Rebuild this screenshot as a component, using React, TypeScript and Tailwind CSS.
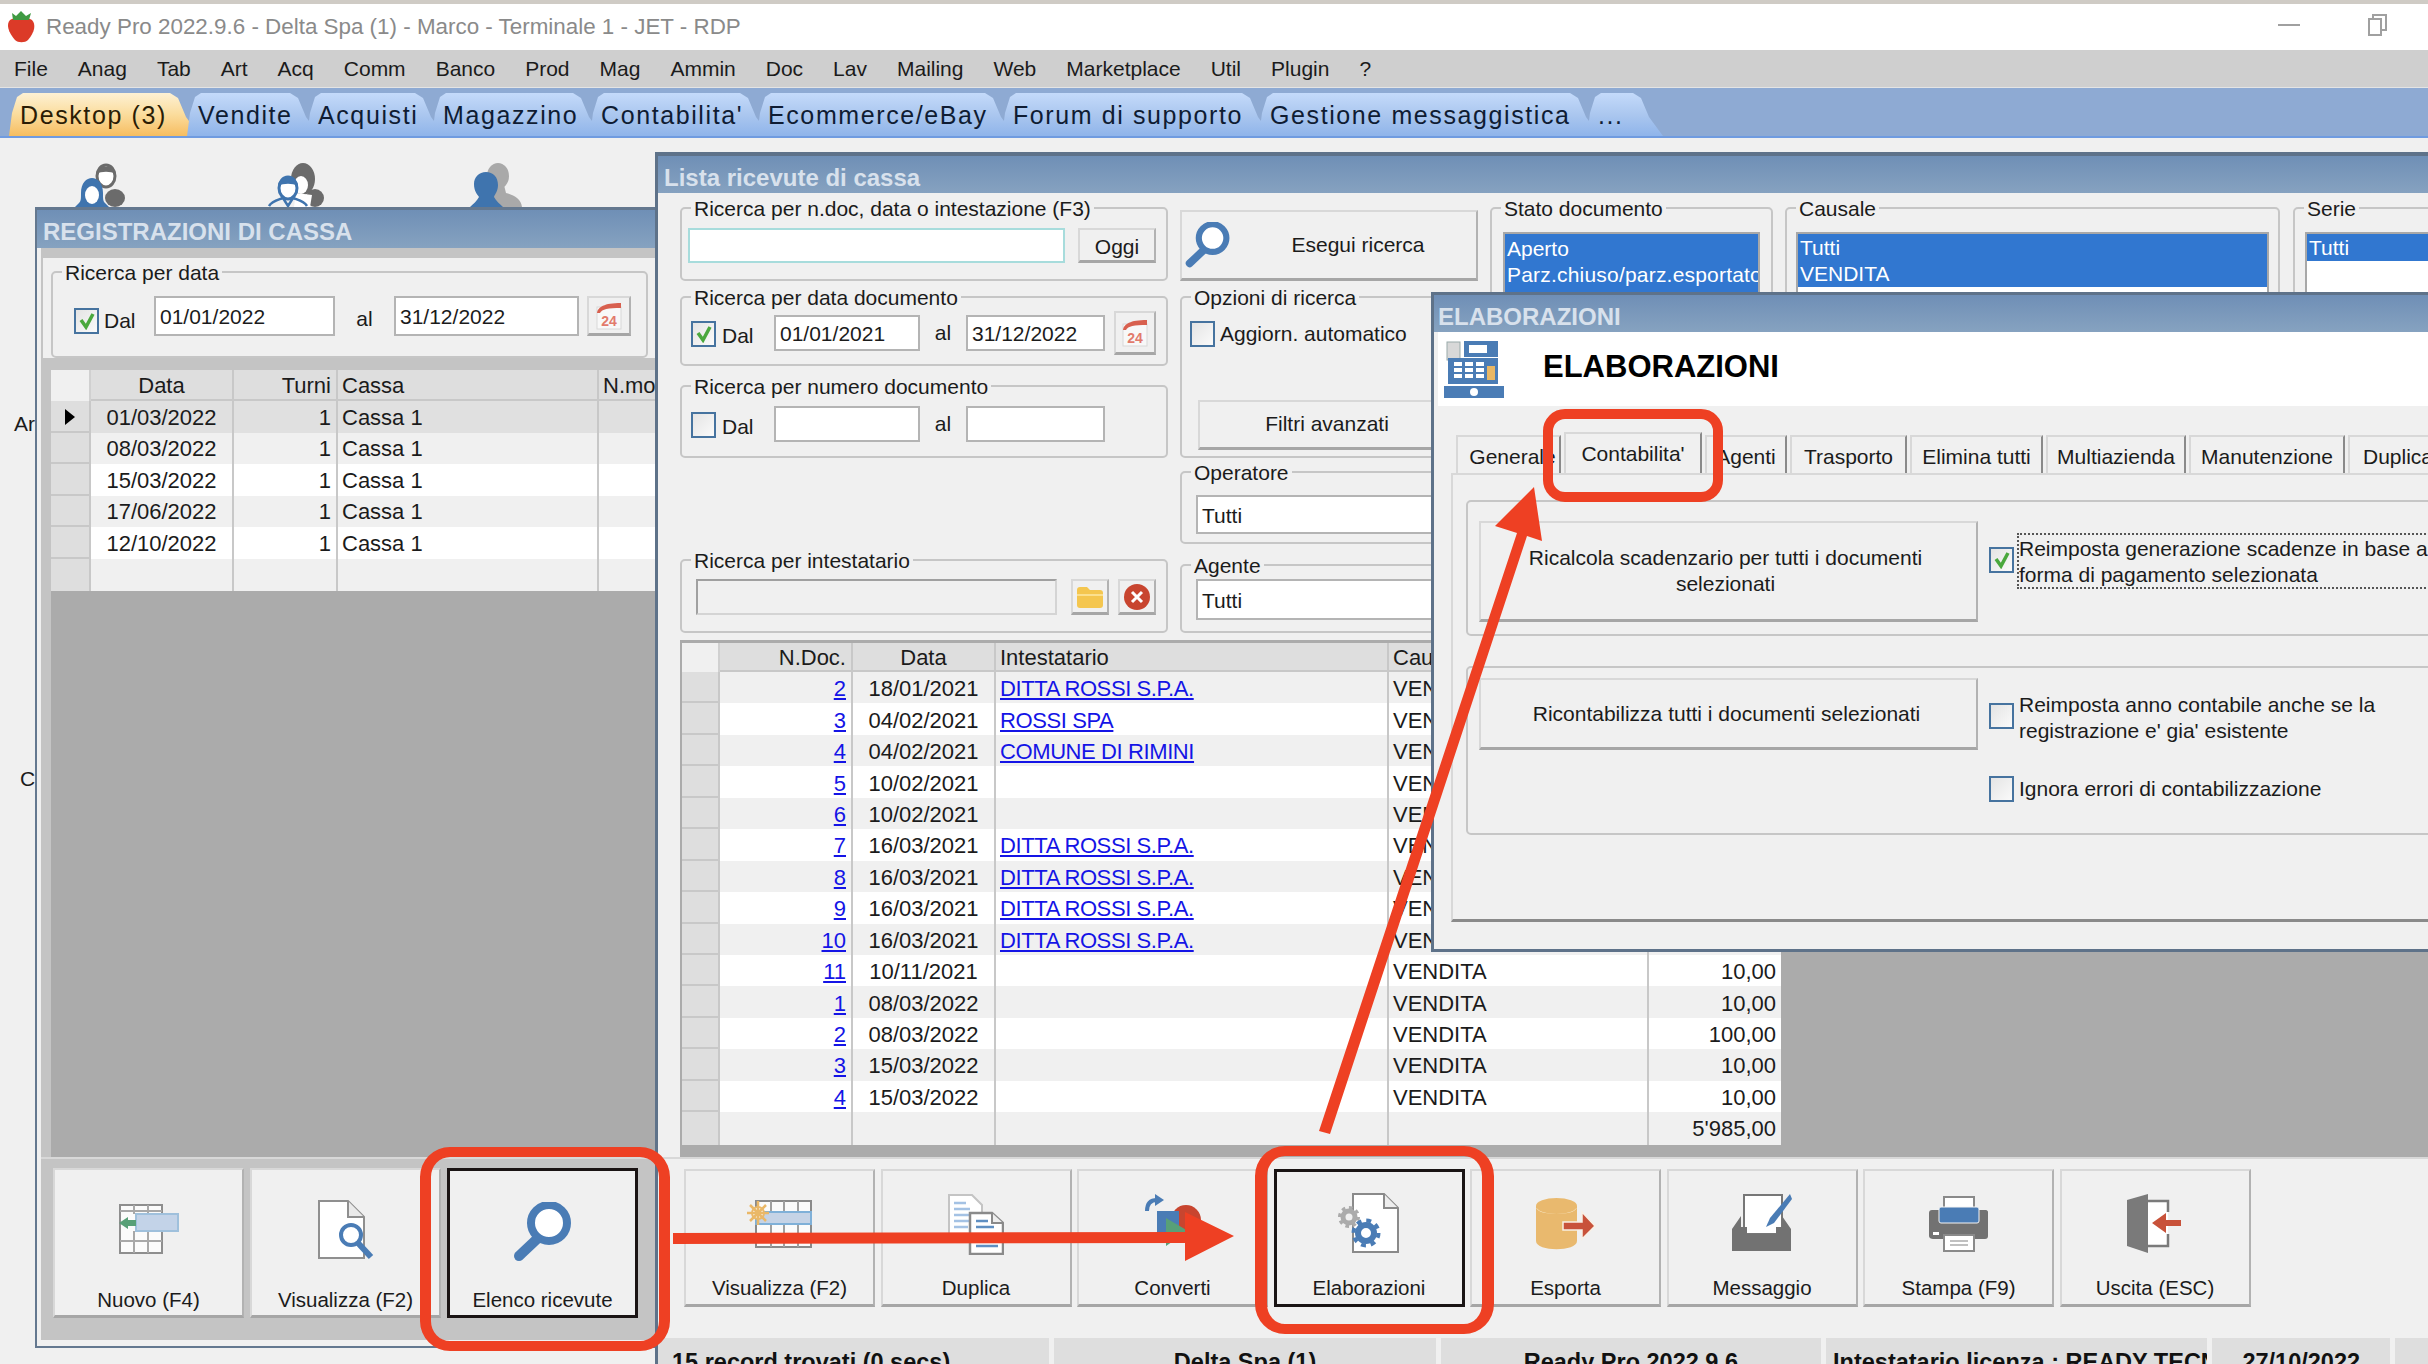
import type { ReactNode } from 'react';

const menuItems = ['File', 'Anag', 'Tab', 'Art', 'Acq', 'Comm', 'Banco', 'Prod', 'Mag', 'Ammin', 'Doc', 'Lav', 'Mailing', 'Web', 'Marketplace', 'Util', 'Plugin', '?'];

const topTabs = [
  { label: 'Desktop (3)', width: 'w-[191px]', active: true },
  { label: 'Vendite', width: 'w-[133px]' },
  { label: 'Acquisti', width: 'w-[138px]' },
  { label: 'Magazzino', width: 'w-[171px]' },
  { label: "Contabilita'", width: 'w-[180px]' },
  { label: 'Ecommerce/eBay', width: 'w-[258px]' },
  { label: 'Forum di supporto', width: 'w-[270px]' },
  { label: 'Gestione messaggistica', width: 'w-[341px]' },
  { label: '...', width: 'w-[76px]' },
];

const cashRows = [
  ['01/03/2022', 'bg-[#e0e0e0]'],
  ['08/03/2022', 'bg-[#f0f0f0]'],
  ['15/03/2022', 'bg-white'],
  ['17/06/2022', 'bg-[#f0f0f0]'],
  ['12/10/2022', 'bg-white'],
];

const docRows = [
  ['2', '18/01/2021', 'DITTA ROSSI S.P.A.', '10,00'],
  ['3', '04/02/2021', 'ROSSI SPA', '10,00'],
  ['4', '04/02/2021', 'COMUNE DI RIMINI', '10,00'],
  ['5', '10/02/2021', '', '10,00'],
  ['6', '10/02/2021', '', '10,00'],
  ['7', '16/03/2021', 'DITTA ROSSI S.P.A.', '10,00'],
  ['8', '16/03/2021', 'DITTA ROSSI S.P.A.', '10,00'],
  ['9', '16/03/2021', 'DITTA ROSSI S.P.A.', '10,00'],
  ['10', '16/03/2021', 'DITTA ROSSI S.P.A.', '10,00'],
  ['11', '10/11/2021', '', '10,00'],
  ['1', '08/03/2022', '', '10,00'],
  ['2', '08/03/2022', '', '100,00'],
  ['3', '15/03/2022', '', '10,00'],
  ['4', '15/03/2022', '', '10,00'],
];

const dialogTabs = [
  { label: 'Generale', width: 'w-[105px] pl-[8px]' },
  { label: "Contabilita'", width: 'w-[138px]', active: true },
  { label: 'Agenti', width: 'w-[82px]' },
  { label: 'Trasporto', width: 'w-[117px]' },
  { label: 'Elimina tutti', width: 'w-[133px]' },
  { label: 'Multiazienda', width: 'w-[140px]' },
  { label: 'Manutenzione', width: 'w-[156px]' },
  { label: 'Duplica', width: 'w-[100px]' },
];

const btnClass = 'border-2 border-[#d8d8d8] border-r-[#b2b2b2] border-b-[3px] border-b-[#a6a6a6] bg-[#f0f0f0]';
const inputClass = 'border-2 border-[#b4b4b4] bg-white pl-[4px] pt-[2px] flex items-center';

function Strawberry() {
  return (
    <svg width="30" height="34" viewBox="0 0 30 34">
      <path d="M4 10 C8 7 22 7 26 10 C30 14 29 22 22 30 C19 33 12 33 9 30 C2 22 0 14 4 10Z" fill="#dc3a28" />
      <path d="M6 3 L10 6 L15 1 L20 6 L25 3 L23 10 L7 10Z" fill="#3f9a42" />
    </svg>
  );
}

function UserPair({ variant }: { variant: 1 | 2 | 3 }) {
  if (variant === 1) {
    return (
      <svg width="54" height="44" viewBox="0 0 54 44">
        <ellipse cx="40" cy="35" rx="10" ry="9" fill="#6b6b6b" />
        <ellipse cx="31" cy="13" rx="9" ry="11" fill="#fff" stroke="#6b6b6b" strokeWidth="3" />
        <path d="M21 11 C22 1 40 1 41 11 C35 8 27 8 21 11Z" fill="#6b6b6b" />
        <path d="M6 30 C6 10 28 10 28 30 C28 36 28 38 30 40 L34 44 H0 L4 40 C6 38 6 36 6 30Z" fill="#3f74ae" />
        <ellipse cx="17" cy="32" rx="7" ry="9" fill="#fff" />
      </svg>
    );
  }
  if (variant === 2) {
    return (
      <svg width="58" height="44" viewBox="0 0 58 44">
        <ellipse cx="47" cy="35" rx="9" ry="9" fill="#6b6b6b" />
        <ellipse cx="35" cy="16" rx="12" ry="16" fill="#6b6b6b" />
        <ellipse cx="33" cy="22" rx="7" ry="9" fill="#fff" />
        <path d="M28 30 L44 32 L42 44 H26Z" fill="#fff" />
        <ellipse cx="20" cy="25" rx="9" ry="11" fill="#fff" stroke="#3f74ae" strokeWidth="3" />
        <path d="M10 23 C10 12 30 12 30 23 C24 20 16 20 10 23Z" fill="#3f74ae" />
        <path d="M1 43 C4 38 10 37 15 35 L20 43 L25 35 C30 37 36 38 39 43" fill="none" stroke="#3f74ae" strokeWidth="2.5" />
      </svg>
    );
  }
  return (
    <svg width="54" height="44" viewBox="0 0 54 44">
      <ellipse cx="28" cy="13" rx="11" ry="13" fill="#a9a9a9" />
      <path d="M22 22 H34 L36 30 C44 32 51 36 52 44 H22Z" fill="#a9a9a9" />
      <path d="M16 9 C23 9 28 14 28 22 C28 28 25 31 24 34 C26 38 30 41 33 44 H0 C3 41 7 38 9 34 C7 31 4 28 4 21 C4 14 9 9 16 9Z" fill="#3f74ae" />
    </svg>
  );
}

function CalendarIcon() {
  return (
    <svg width="30" height="30" viewBox="0 0 30 30">
      <rect x="3" y="6" width="24" height="22" fill="#f8f8f8" stroke="#d8d8d8" />
      <path d="M3 12 C4 6 10 2 27 2 L27 7 C14 7 8 8 6 12Z" fill="#d8604f" />
      <text x="15" y="25" textAnchor="middle" fontSize="14" fontWeight="700" fill="#e27a6c" fontFamily="Liberation Sans, sans-serif">24</text>
    </svg>
  );
}

function CheckBox({ checked = false, className = '' }: { checked?: boolean; className?: string }) {
  return (
    <div className={`w-[25px] h-[26px] shrink-0 border-2 border-[#46739f] bg-gradient-to-br from-[#e4e4e4] to-[#fafafa] flex items-center justify-center ${className}`}>
      {checked && (
        <svg width="18" height="18" viewBox="0 0 18 18">
          <path d="M3 8 L8 15 L15 2" fill="none" stroke="#4aa83d" strokeWidth="3.5" />
        </svg>
      )}
    </div>
  );
}

function Magnifier({ size }: { size: number }) {
  return (
    <svg width={size} height={size} viewBox="0 0 60 60">
      <circle cx="36" cy="21" r="18" fill="#fff" stroke="#4a7cb5" strokeWidth="8" />
      <path d="M24 37 L6 54" stroke="#4a7cb5" strokeWidth="10" strokeLinecap="round" />
    </svg>
  );
}

function NuovoIcon() {
  return (
    <svg width="60" height="50" viewBox="0 0 60 50">
      <path d="M1 1H43V49H1Z" fill="#fbfbfb" stroke="#8e8e8e" strokeWidth="2" />
      <path d="M1 7H43M1 37H43M15 1V10M29 1V10M15 27V49M29 27V49" stroke="#a8a8a8" strokeWidth="2" />
      <rect x="17" y="10" width="42" height="17" fill="#c3d3e8" stroke="#9fc0dc" strokeWidth="2" />
      <path d="M0 19 L9 13 V16 H17 V22 H9 V25Z" fill="#58a077" />
    </svg>
  );
}

function DocSearchIcon() {
  return (
    <svg width="56" height="60" viewBox="0 0 56 60">
      <path d="M1 1 H30 L46 17 V58 H1Z" fill="#fff" stroke="#8f8f8f" strokeWidth="2" />
      <path d="M30 1 V17 H46" fill="#eaeaea" stroke="#8f8f8f" strokeWidth="2" />
      <circle cx="33" cy="35" r="10" fill="#fff" stroke="#4a7cb5" strokeWidth="4" />
      <path d="M40 43 L53 57" stroke="#4a7cb5" strokeWidth="6" />
    </svg>
  );
}

function TableStarIcon() {
  return (
    <svg width="66" height="48" viewBox="0 0 66 48">
      <path d="M9 1H64V47H9Z" fill="#fbfbfb" stroke="#8a8a8a" strokeWidth="2" />
      <path d="M9 36H64M24 1V12M37 1V12M51 1V12M24 24V47M37 24V47M51 24V47" stroke="#a0a0a0" strokeWidth="2" />
      <rect x="9" y="12" width="55" height="12" fill="#c5d3e6" stroke="#7fb0d8" strokeWidth="2" />
      <circle cx="11" cy="13" r="6" fill="#fbfbfb" stroke="#eab868" strokeWidth="2" />
      <path d="M11 1V25M0 13H22M3 5L19 21M19 5L3 21" stroke="#eab868" strokeWidth="2.5" />
    </svg>
  );
}

function DuplicaIcon() {
  return (
    <svg width="56" height="61" viewBox="0 0 56 61">
      <path d="M1 1H24L34 11V46H1Z" fill="#fff" stroke="#c4c4c4" strokeWidth="2" />
      <path d="M6 9H18M6 15H22M6 21H24M6 27H24M6 33H20" stroke="#a4c2e4" strokeWidth="2.5" />
      <path d="M22 19H44L55 29V60H22Z" fill="#fff" stroke="#8a8a8a" strokeWidth="2.5" />
      <path d="M44 19V29H55" fill="#eee" stroke="#8a8a8a" strokeWidth="2" />
      <path d="M28 27H40M28 33H46M28 46H50M28 52H50" stroke="#5f8fc2" strokeWidth="2.5" />
    </svg>
  );
}

function ConvertiIcon() {
  return (
    <svg width="58" height="56" viewBox="0 0 58 56">
      <circle cx="42" cy="26" r="15" fill="#c8452f" />
      <rect x="13" y="17" width="22" height="24" fill="#4a7cb5" />
      <path d="M22 24 L44 37 L22 52Z" fill="#58a077" />
      <path d="M3 17 C3 9 7 6 13 6" fill="none" stroke="#4a7cb5" strokeWidth="4" />
      <path d="M11 0 L20 6 L11 12Z" fill="#4a7cb5" />
    </svg>
  );
}

function GearDocIcon() {
  return (
    <svg width="62" height="62" viewBox="0 0 62 62">
      <path d="M15 2H46L60 16V60H15Z" fill="#fff" stroke="#8a8a8a" strokeWidth="2" />
      <path d="M46 2V16H60" fill="#eee" stroke="#8a8a8a" strokeWidth="2" />
      <circle cx="11" cy="25" r="6" fill="#f0f0f0" stroke="#ababab" strokeWidth="5" />
      <circle cx="11" cy="25" r="9.5" fill="none" stroke="#ababab" strokeWidth="3" strokeDasharray="3.7 3.7" />
      <circle cx="28" cy="41" r="8" fill="#fff" stroke="#4a7cb5" strokeWidth="6" />
      <circle cx="28" cy="41" r="12.5" fill="none" stroke="#4a7cb5" strokeWidth="4" strokeDasharray="4.9 4.9" />
    </svg>
  );
}

function EsportaIcon() {
  return (
    <svg width="60" height="52" viewBox="0 0 60 52">
      <path d="M0 8 V43 C0 54 41 54 41 43 V8Z" fill="#e9b96e" />
      <path d="M1 10 C5 17 36 17 40 10" fill="none" stroke="#f9e8c8" strokeWidth="1.5" />
      <ellipse cx="20.5" cy="8" rx="20.5" ry="8" fill="#e9b96e" />
      <path d="M27 24H46V14L59 28L46 41V32H27Z" fill="#c8523a" stroke="#f8efe4" strokeWidth="1.5" />
    </svg>
  );
}

function MessaggioIcon() {
  return (
    <svg width="60" height="58" viewBox="0 0 60 58">
      <path d="M12 1H50V40H12Z" fill="#fff" stroke="#777" strokeWidth="2" />
      <path d="M58 0 L38 24 L34 33 L42 29 L60 5Z" fill="#4a7cb5" />
      <path d="M9 22 V33 H15 V40 H44 V33 H50 V22 L59 35 V57 H0 V35Z" fill="#727272" />
    </svg>
  );
}

function PrinterIcon() {
  return (
    <svg width="60" height="56" viewBox="0 0 60 56">
      <rect x="15" y="1" width="30" height="14" fill="#fff" stroke="#8a8a8a" strokeWidth="2" />
      <path d="M3 14H57C58 14 59 15 59 16V40C59 42 58 43 56 43H4C2 43 0 42 0 40V17C0 15 1 14 3 14Z" fill="#727272" />
      <rect x="10" y="11" width="40" height="16" rx="2" fill="#4a7cb5" stroke="#f4f4f4" strokeWidth="1" />
      <rect x="4" y="36" width="6" height="3" fill="#fff" />
      <rect x="15" y="39" width="30" height="16" fill="#fff" stroke="#8a8a8a" strokeWidth="2" />
      <path d="M21 45H39M21 49H39" stroke="#c0c0c0" strokeWidth="2" />
    </svg>
  );
}

function UscitaIcon() {
  return (
    <svg width="56" height="60" viewBox="0 0 56 60">
      <rect x="21" y="7" width="20" height="45" fill="#fff" />
      <path d="M21 7H41V18M41 40V52H21" fill="none" stroke="#7a7a7a" strokeWidth="2.5" />
      <path d="M0 6 L21 0 V59 L0 52Z" fill="#7a7a7a" />
      <path d="M54 26H39V19L25 29L39 39V32H54Z" fill="#c8523a" />
    </svg>
  );
}

function CashRegister() {
  return (
    <svg width="60" height="58" viewBox="0 0 60 58">
      <rect x="3" y="2" width="13" height="18" fill="#d8d8d8" stroke="#9aa" />
      <rect x="20" y="1" width="34" height="16" fill="#4a7cb5" />
      <rect x="25" y="5" width="18" height="8" fill="#fff" />
      <path d="M4 18H54V44H4Z" fill="#4a7cb5" />
      <path d="M10 24H18M21 24H29M32 24H40M10 30H18M21 30H29M32 30H40M10 36H18M21 36H29M32 36H40" stroke="#fff" strokeWidth="4" />
      <rect x="43" y="26" width="8" height="14" fill="#e8b765" />
      <rect x="0" y="46" width="60" height="12" fill="#4a7cb5" />
      <circle cx="30" cy="52" r="4" fill="#fff" />
    </svg>
  );
}

function Group({ label, className, children }: { label: string; className: string; children?: ReactNode }) {
  return (
    <div className={`relative shrink-0 border-2 border-[#c6c6c6] rounded-[5px] ${className}`}>
      <span className="absolute -top-[12px] left-[9px] bg-[#f0f0f0] px-[3px] leading-[24px] whitespace-nowrap text-[#1b1b1b]">{label}</span>
      {children}
    </div>
  );
}

function ToolButton({ label, icon, selected, height, iconTop, labelBottom }: { label: string; icon: ReactNode; selected?: boolean; height: string; iconTop: string; labelBottom: string }) {
  return (
    <div className={`w-[191px] shrink-0 flex flex-col items-center justify-between ${height} ${selected ? 'border-[3px] border-[#1a1414] bg-[#f0f0f0]' : btnClass}`}>
      <div className={iconTop}>{icon}</div>
      <span className={`leading-[24px] whitespace-nowrap text-[#1b1b1b] ${labelBottom}`}>{label}</span>
    </div>
  );
}

function DateFields({ from, to, checked, calendar }: { from?: string; to?: string; checked?: boolean; calendar?: boolean }) {
  return (
    <div className="flex items-center h-full pt-[4px] pl-[9px]">
      <CheckBox checked={checked} className="mt-[2px]" />
      <span className="ml-[6px] w-[52px] mt-[6px]">Dal</span>
      <div className={`${inputClass} w-[146px] h-[36px]`}>{from}</div>
      <span className="w-[46px] text-center">al</span>
      <div className={`${inputClass} w-[139px] h-[36px]`}>{to}</div>
      {calendar && (
        <div className={`${btnClass} ml-[9px] w-[42px] h-[44px] flex items-center justify-center`}>
          <CalendarIcon />
        </div>
      )}
    </div>
  );
}

function CashWindow() {
  return (
    <div className="absolute left-[35px] top-[69px] w-[640px] h-[1141px] bg-[#f0f0f0] border-l-2 border-t-[3px] border-b-2 border-[#64788f] flex flex-col">
      <div className="h-[38px] shrink-0 bg-gradient-to-b from-[#6f8fb6] to-[#86a2c0] pl-[6px] pt-[6px] flex items-center text-[24px] font-bold text-[#d8e1ec] leading-none">
        REGISTRAZIONI DI CASSA
      </div>
      <div className="ml-[4px] h-[1092px] shrink-0 bg-[#c4c4c4] pt-[10px] flex flex-col">
        <div className="ml-[2px] h-[100px] shrink-0 bg-[#f0f0f0] pt-[13px] pl-[8px] w-[612px]">
          <Group label="Ricerca per data" className="w-[597px] h-[87px]">
            <div className="flex items-center h-full pt-[3px] pl-[21px]">
              <CheckBox checked className="mt-[10px]" />
              <span className="ml-[5px] w-[50px] mt-[10px]">Dal</span>
              <div className={`${inputClass} w-[181px] h-[40px]`}>01/01/2022</div>
              <span className="w-[59px] text-center mt-[6px]">al</span>
              <div className={`${inputClass} w-[185px] h-[40px]`}>31/12/2022</div>
              <div className={`${btnClass} ml-[8px] w-[44px] h-[40px] flex items-center justify-center`}>
                <CalendarIcon />
              </div>
            </div>
          </Group>
        </div>
        <div className="mt-[12px] ml-[10px] h-[787px] shrink-0 bg-[#ababab] w-[606px] overflow-hidden text-[22px] leading-none">
          <div className="grid grid-cols-[40px_143px_104px_261px_60px] h-[31px] [&>div]:pt-[2px]">
            <div className="bg-[#f0f0f0] border-r-2 border-[#d0d0d0]" />
            <div className="bg-[#dedede] border-r-2 border-b-2 border-[#c8c8c8] flex items-center justify-center">Data</div>
            <div className="bg-[#dedede] border-r-2 border-b-2 border-[#c8c8c8] flex items-center justify-end pr-[5px]">Turni</div>
            <div className="bg-[#dedede] border-r-2 border-b-2 border-[#c8c8c8] flex items-center pl-[4px]">Cassa</div>
            <div className="bg-[#dedede] border-b-2 border-[#c8c8c8] flex items-center pl-[4px] overflow-hidden whitespace-nowrap">N.mov</div>
          </div>
          {cashRows.map(([date, bg], i) => (
            <div key={date} className={`grid grid-cols-[40px_143px_104px_261px_60px] h-[31.5px] [&>div]:pt-[2px] ${bg}`}>
              <div className="bg-[#dedede] border-r-2 border-b-2 border-[#c8c8c8] flex items-center justify-center">
                {i === 0 && <div className="w-0 h-0 border-y-[8px] border-y-transparent border-l-[10px] border-l-black" />}
              </div>
              <div className="border-r-2 border-[#c8c8c8] flex items-center justify-center">{date}</div>
              <div className="border-r-2 border-[#c8c8c8] flex items-center justify-end pr-[5px]">1</div>
              <div className="border-r-2 border-[#c8c8c8] flex items-center pl-[4px]">Cassa 1</div>
              <div />
            </div>
          ))}
          <div className="grid grid-cols-[40px_143px_104px_261px_60px] h-[32px] bg-[#f0f0f0]">
            <div className="bg-[#dedede] border-r-2 border-[#c8c8c8]" />
            <div className="border-r-2 border-[#c8c8c8]" />
            <div className="border-r-2 border-[#c8c8c8]" />
            <div className="border-r-2 border-[#c8c8c8]" />
            <div />
          </div>
        </div>
        <div className="flex-1 border-t-2 border-[#d8d8d8] pt-[9px] pl-[12px] flex gap-[6px] text-[20.5px]">
          <ToolButton label="Nuovo (F4)" icon={<NuovoIcon />} height="h-[150px]" iconTop="mt-[34px]" labelBottom="mb-[3px]" />
          <ToolButton label="Visualizza (F2)" icon={<DocSearchIcon />} height="h-[150px]" iconTop="mt-[30px]" labelBottom="mb-[3px]" />
          <ToolButton label="Elenco ricevute" icon={<Magnifier size={60} />} height="h-[150px]" iconTop="mt-[31px]" labelBottom="mb-[3px]" selected />
        </div>
      </div>
    </div>
  );
}

function DocGrid() {
  const cols = 'grid grid-cols-[38px_133px_143px_393px_260px_132px] w-[1099px]';
  return (
    <div className="ml-[22px] h-[517px] shrink-0 bg-[#ababab] pl-[2px] pt-[3px] text-[22px] leading-none overflow-hidden">
      <div className={`${cols} h-[29px] [&>div]:pt-[2px]`}>
        <div className="bg-[#f0f0f0] border-r-2 border-[#d0d0d0]" />
        <div className="bg-[#dedede] border-r-2 border-b-2 border-[#c8c8c8] flex items-center justify-end pr-[5px]">N.Doc.</div>
        <div className="bg-[#dedede] border-r-2 border-b-2 border-[#c8c8c8] flex items-center justify-center">Data</div>
        <div className="bg-[#dedede] border-r-2 border-b-2 border-[#c8c8c8] flex items-center pl-[4px]">Intestatario</div>
        <div className="bg-[#dedede] border-r-2 border-b-2 border-[#c8c8c8] flex items-center pl-[4px]">Causale</div>
        <div className="bg-[#dedede] border-b-2 border-[#c8c8c8] flex items-center justify-end pr-[5px]">Totale</div>
      </div>
      {docRows.map(([num, date, name, total], i) => (
        <div key={i} className={`${cols} h-[31.45px] [&>div]:pt-[3px] ${i % 2 === 0 ? 'bg-[#f0f0f0]' : 'bg-white'}`}>
          <div className="bg-[#dedede] border-r-2 border-b-2 border-[#c8c8c8]" />
          <div className="border-r-2 border-[#c8c8c8] flex items-center justify-end pr-[5px] text-[#1414e6] underline">{num}</div>
          <div className="border-r-2 border-[#c8c8c8] flex items-center justify-center">{date}</div>
          <div className="border-r-2 border-[#c8c8c8] flex items-center pl-[4px] text-[#1414e6] underline tracking-[-0.4px]">{name}</div>
          <div className="border-r-2 border-[#c8c8c8] flex items-center pl-[4px]">VENDITA</div>
          <div className="flex items-center justify-end pr-[5px]">{total}</div>
        </div>
      ))}
      <div className={`${cols} h-[33px] bg-[#f0f0f0]`}>
        <div className="bg-[#dedede] border-r-2 border-[#c8c8c8]" />
        <div className="border-r-2 border-[#c8c8c8]" />
        <div className="border-r-2 border-[#c8c8c8]" />
        <div className="border-r-2 border-[#c8c8c8]" />
        <div className="border-r-2 border-[#c8c8c8]" />
        <div className="flex items-center justify-end pr-[5px]">5'985,00</div>
      </div>
    </div>
  );
}

function ListWindow() {
  return (
    <div className="absolute left-[655px] top-[14px] w-[1800px] h-[1212px] bg-[#f0f0f0] border-l-[3px] border-t-[4px] border-[#5e7289] flex flex-col">
      <div className="h-[37px] shrink-0 bg-gradient-to-b from-[#6f8fb6] to-[#86a2c0] pl-[6px] pt-[6px] flex items-center text-[24px] font-bold text-[#d8e1ec] leading-none">
        Lista ricevute di cassa
      </div>
      <div className="h-[447px] shrink-0 flex pl-[22px]">
        <div className="w-[488px] shrink-0 flex flex-col pt-[14px]">
          <Group label="Ricerca per n.doc, data o intestazione (F3)" className="h-[74px] flex items-start pt-[19px] pl-[6px]">
            <div className="w-[377px] h-[35px] border-2 border-[#a7dcdc] bg-white" />
            <div className={`${btnClass} ml-[13px] w-[78px] h-[35px] pt-[3px] flex items-center justify-center`}>Oggi</div>
          </Group>
          <Group label="Ricerca per data documento" className="mt-[15px] h-[70px]">
            <DateFields from="01/01/2021" to="31/12/2022" checked calendar />
          </Group>
          <Group label="Ricerca per numero documento" className="mt-[19px] h-[73px]">
            <DateFields />
          </Group>
          <Group label="Ricerca per intestatario" className="mt-[101px] h-[74px] flex items-start pt-[18px] pl-[14px]">
            <div className="w-[361px] h-[36px] border-2 border-[#d4d4d4] border-t-[#a0a0a0] border-l-[#a0a0a0] bg-[#f0f0f0]" />
            <div className={`${btnClass} ml-[14px] w-[38px] h-[36px] flex items-center justify-center`}>
              <svg width="28" height="24" viewBox="0 0 28 24">
                <path d="M1 5 C1 3 2 2 4 2 H11 L14 5 H24 C26 5 27 6 27 8 V20 C27 22 26 23 24 23 H4 C2 23 1 22 1 20Z" fill="#f4c64f" />
                <path d="M1 10 H27" stroke="#fbe08f" strokeWidth="2" />
              </svg>
            </div>
            <div className={`${btnClass} ml-[9px] w-[38px] h-[36px] flex items-center justify-center`}>
              <svg width="28" height="28" viewBox="0 0 28 28">
                <circle cx="14" cy="14" r="13" fill="#c8452f" />
                <path d="M9 9 L19 19 M19 9 L9 19" stroke="#fff" strokeWidth="3" />
              </svg>
            </div>
          </Group>
        </div>
        <div className="ml-[12px] w-[298px] shrink-0 flex flex-col pt-[17px]">
          <div className={`${btnClass} h-[71px] shrink-0 relative flex items-center justify-center pl-[58px]`}>
            <div className="absolute left-[3px] top-[10px]">
              <Magnifier size={46} />
            </div>
            Esegui ricerca
          </div>
          <Group label="Opzioni di ricerca" className="mt-[15px] h-[162px] flex flex-col pl-[8px]">
            <div className="flex items-center mt-[20px]">
              <CheckBox />
              <span className="ml-[5px] whitespace-nowrap">Aggiorn. automatico</span>
            </div>
            <div className={`${btnClass} mt-[50px] ml-[8px] w-[270px] h-[50px] flex items-center justify-center pr-[12px]`}>Filtri avanzati</div>
          </Group>
          <Group label="Operatore" className="mt-[13px] h-[73px] pt-[22px] pl-[14px]">
            <div className={`${inputClass} w-[270px] h-[39px]`}>Tutti</div>
          </Group>
          <Group label="Agente" className="mt-[20px] h-[69px] pt-[13px] pl-[14px]">
            <div className={`${inputClass} w-[270px] h-[41px]`}>Tutti</div>
          </Group>
        </div>
        <div className="ml-[12px] shrink-0 flex pt-[14px] gap-[12px] items-start">
          <Group label="Stato documento" className="w-[283px] h-[200px] px-[11px] pt-[23px]">
            <div className="border-2 border-[#a8a8a8] h-[170px] bg-white overflow-hidden leading-[26px] whitespace-nowrap text-white">
              <div className="bg-[#3177d0] pl-[2px] h-[80px] pt-[2px]">
                <div>Aperto</div>
                <div className="tracking-[0.2px]">Parz.chiuso/parz.esportato</div>
                <div>Chiuso</div>
              </div>
            </div>
          </Group>
          <Group label="Causale" className="w-[495px] h-[200px] px-[9px] pt-[23px]">
            <div className="border-2 border-[#a8a8a8] h-[170px] bg-white overflow-hidden leading-[26px] text-white">
              <div className="bg-[#3177d0] pl-[2px] pt-[1px] h-[53px]">
                <div>Tutti</div>
                <div>VENDITA</div>
              </div>
            </div>
          </Group>
          <Group label="Serie" className="ml-[1px] w-[200px] h-[200px] px-[10px] pt-[23px]">
            <div className="border-2 border-[#a8a8a8] h-[170px] bg-white overflow-hidden leading-[26px] text-white">
              <div className="bg-[#3177d0] pl-[2px] pt-[1px] h-[27px]">Tutti</div>
            </div>
          </Group>
        </div>
      </div>
      <DocGrid />
      <div className="h-[181px] shrink-0 border-t-2 border-[#d8d8d8] pt-[10px] pl-[26px] flex gap-[5.5px] text-[20.5px]">
        <ToolButton label="Visualizza (F2)" icon={<TableStarIcon />} height="h-[138px]" iconTop="mt-[29px]" labelBottom="mb-[4px]" />
        <ToolButton label="Duplica" icon={<DuplicaIcon />} height="h-[138px]" iconTop="mt-[23px]" labelBottom="mb-[4px]" />
        <ToolButton label="Converti" icon={<ConvertiIcon />} height="h-[138px]" iconTop="mt-[23px]" labelBottom="mb-[4px]" />
        <ToolButton label="Elaborazioni" icon={<GearDocIcon />} height="h-[138px]" iconTop="mt-[20px]" labelBottom="mb-[4px]" selected />
        <ToolButton label="Esporta" icon={<EsportaIcon />} height="h-[138px]" iconTop="mt-[27px]" labelBottom="mb-[4px]" />
        <ToolButton label="Messaggio" icon={<MessaggioIcon />} height="h-[138px]" iconTop="mt-[23px]" labelBottom="mb-[4px]" />
        <ToolButton label="Stampa (F9)" icon={<PrinterIcon />} height="h-[138px]" iconTop="mt-[25px]" labelBottom="mb-[4px]" />
        <ToolButton label="Uscita (ESC)" icon={<UscitaIcon />} height="h-[138px]" iconTop="mt-[23px]" labelBottom="mb-[4px]" />
      </div>
      <div className="flex-1 flex gap-[5px] font-bold text-[23.5px] text-[#111] whitespace-nowrap">
        <div className="w-[392px] bg-[#dedede] pl-[14px] pt-[7px]">15 record trovati (0 secs)</div>
        <div className="w-[382px] bg-[#dedede] text-center pt-[7px]">Delta Spa (1)</div>
        <div className="w-[381px] bg-[#dedede] text-center pt-[7px]">Ready Pro 2022.9.6</div>
        <div className="w-[382px] bg-[#dedede] pl-[7px] pt-[7px] overflow-hidden">Intestatario licenza : READY TECNOLOGIE</div>
        <div className="w-[178px] bg-[#dedede] text-center pt-[7px]">27/10/2022</div>
        <div className="w-[60px] bg-[#dedede]" />
      </div>
    </div>
  );
}

function Dialog() {
  return (
    <div className="absolute left-[1431px] top-[154px] w-[1100px] h-[660px] bg-[#f0f0f0] border-l-[3px] border-t-[3px] border-b-[3px] border-[#5e7289] flex flex-col">
      <div className="h-[37px] shrink-0 bg-gradient-to-b from-[#6f8fb6] to-[#86a2c0] pl-[4px] pt-[6px] flex items-center text-[24px] font-bold text-[#d8e1ec] leading-none">
        ELABORAZIONI
      </div>
      <div className="ml-[4px] h-[74px] shrink-0 bg-white flex items-center pl-[6px]">
        <CashRegister />
        <span className="ml-[39px] -mt-[5px] text-[31px] font-bold text-black leading-none">ELABORAZIONI</span>
      </div>
      <div className="ml-[22px] mt-[26px] h-[41px] shrink-0 flex items-end gap-[3px] whitespace-nowrap">
        {dialogTabs.map((tab) => (
          <div key={tab.label} className={`${tab.width} shrink-0 border-t-2 border-l-2 border-r-2 border-t-[#d8d8d8] border-l-[#d8d8d8] border-r-[#8a8a8a] flex items-center justify-center ${tab.active ? 'h-[41px] bg-[#f0f0f0]' : 'h-[38px] pt-[4px]'}`}>
            {tab.label}
          </div>
        ))}
      </div>
      <div className="ml-[17px] h-[449px] shrink-0 border-t-2 border-l-2 border-b-[3px] border-t-[#d8d8d8] border-l-[#d8d8d8] border-b-[#8a8a8a] pl-[13px] pt-[25px] flex flex-col">
        <div className="w-[1000px] h-[136px] shrink-0 border-2 border-[#c6c6c6] rounded-[5px] pl-[11px] pt-[19px] flex items-start">
          <div className={`${btnClass} w-[499px] h-[101px] shrink-0 flex items-center justify-center text-center leading-[26px] pl-[30px] pr-[36px]`}>
            Ricalcola scadenzario per tutti i documenti selezionati
          </div>
          <CheckBox checked className="ml-[11px] mt-[26px]" />
          <div className="ml-[3px] mt-[12px] w-[620px] h-[56px] shrink-0 border-2 border-dotted border-[#555] leading-[26px] whitespace-nowrap pt-[1px]">
            <div>Reimposta generazione scadenze in base alla</div>
            <div>forma di pagamento selezionata</div>
          </div>
        </div>
        <div className="mt-[30px] w-[1000px] h-[169px] shrink-0 border-2 border-[#c6c6c6] rounded-[5px] pl-[11px] pt-[10px] flex items-start">
          <div className={`${btnClass} w-[499px] h-[72px] shrink-0 flex items-center justify-center pr-[4px]`}>
            Ricontabilizza tutti i documenti selezionati
          </div>
          <div className="ml-[11px] flex flex-col">
            <div className="flex items-start mt-[25px]">
              <CheckBox />
              <div className="ml-[5px] -mt-[11px] leading-[26px]">
                <div>Reimposta anno contabile anche se la</div>
                <div>registrazione e' gia' esistente</div>
              </div>
            </div>
            <div className="flex items-center mt-[29px]">
              <CheckBox />
              <span className="ml-[5px]">Ignora errori di contabilizzazione</span>
            </div>
          </div>
        </div>
      </div>
    </div>
  );
}

export default function App() {
  return (
    <div className="relative w-[2428px] h-[1364px] overflow-hidden flex flex-col bg-[#f0f0f0] text-[21px] text-[#1b1b1b] font-['Liberation_Sans',Arial,sans-serif]">
      <div className="h-[4px] shrink-0 bg-[#cfcbc5]" />
      <div className="h-[46px] shrink-0 bg-white flex items-center pl-[6px] relative">
        <Strawberry />
        <span className="ml-[10px] text-[22.4px] text-[#8a8a8a]">Ready Pro 2022.9.6 - Delta Spa (1) - Marco - Terminale 1 - JET - RDP</span>
        <div className="absolute left-[2278px] top-[20px] w-[22px] h-[2px] bg-[#a0a0a0]" />
        <svg className="absolute left-[2366px] top-[9px]" width="22" height="24" viewBox="0 0 22 24">
          <path d="M7 5V2H20V17H15" fill="none" stroke="#a0a0a0" strokeWidth="2" />
          <rect x="3" y="6" width="12" height="16" fill="#fff" stroke="#a0a0a0" strokeWidth="2" />
        </svg>
      </div>
      <div className="h-[38px] shrink-0 bg-[#cfcfcf] border-b border-[#e4e4e4] flex items-center gap-[30px] pl-[14px] pt-[1px]">
        {menuItems.map((item) => (
          <span key={item}>{item}</span>
        ))}
      </div>
      <div className="h-[50px] shrink-0 bg-[#8eaad3] flex items-end pl-[9px] border-b-2 border-[#6f9be0]">
        {topTabs.map((tab) => (
          <div
            key={tab.label}
            className={`${tab.width} -mr-[13px] h-[43px] shrink-0 pl-[11px] pt-[2px] flex items-center text-[25px] tracking-[1.6px] whitespace-nowrap [clip-path:polygon(0_100%,3px_20px,8px_4px,14px_0,calc(100%-30px)_0,calc(100%-22px)_5px,calc(100%-14px)_24px,100%_100%)] bg-gradient-to-b ${tab.active ? 'from-[#fdf1d4] via-[#fbdc9c] to-[#f6bd5f] text-[#2a1c05]' : 'from-[#c4dafa] via-[#abc7ef] to-[#8fb4ea] text-[#0f1c33]'}`}
          >
            {tab.label}
          </div>
        ))}
      </div>
      <div className="relative flex-1 bg-[#f0f0f0]">
        <div className="absolute left-[75px] top-[25px]"><UserPair variant={1} /></div>
        <div className="absolute left-[268px] top-[25px]"><UserPair variant={2} /></div>
        <div className="absolute left-[470px] top-[25px]"><UserPair variant={3} /></div>
        <span className="absolute left-[14px] top-[270px]">Ar</span>
        <span className="absolute left-[20px] top-[625px]">C</span>
        <CashWindow />
        <ListWindow />
        <Dialog />
      </div>

      {/* annotazioni rosse sopra lo screenshot */}
      <div className="absolute left-[420px] top-[1147px] w-[250px] h-[204px] border-x-[11px] border-y-[10px] border-[#ee4023] rounded-[30px]" />
      <div className="absolute left-[1255px] top-[1146px] w-[239px] h-[188px] border-x-[12px] border-y-[10px] border-[#ee4023] rounded-[30px]" />
      <div className="absolute left-[1543px] top-[409px] w-[180px] h-[93px] border-[10px] border-[#ee4023] rounded-[22px]" />
      <svg className="absolute left-0 top-0 pointer-events-none" width="2428" height="1364" viewBox="0 0 2428 1364">
        <path d="M673 1233 L1185 1232 L1185 1212 L1234 1236 L1185 1261 L1185 1243 L673 1244Z" fill="#ee4023" />
        <path d="M1534 487 L1495 526 L1517 533 L1319 1131 L1330 1134 L1527 536 L1542 541Z" fill="#ee4023" />
      </svg>
    </div>
  );
}
